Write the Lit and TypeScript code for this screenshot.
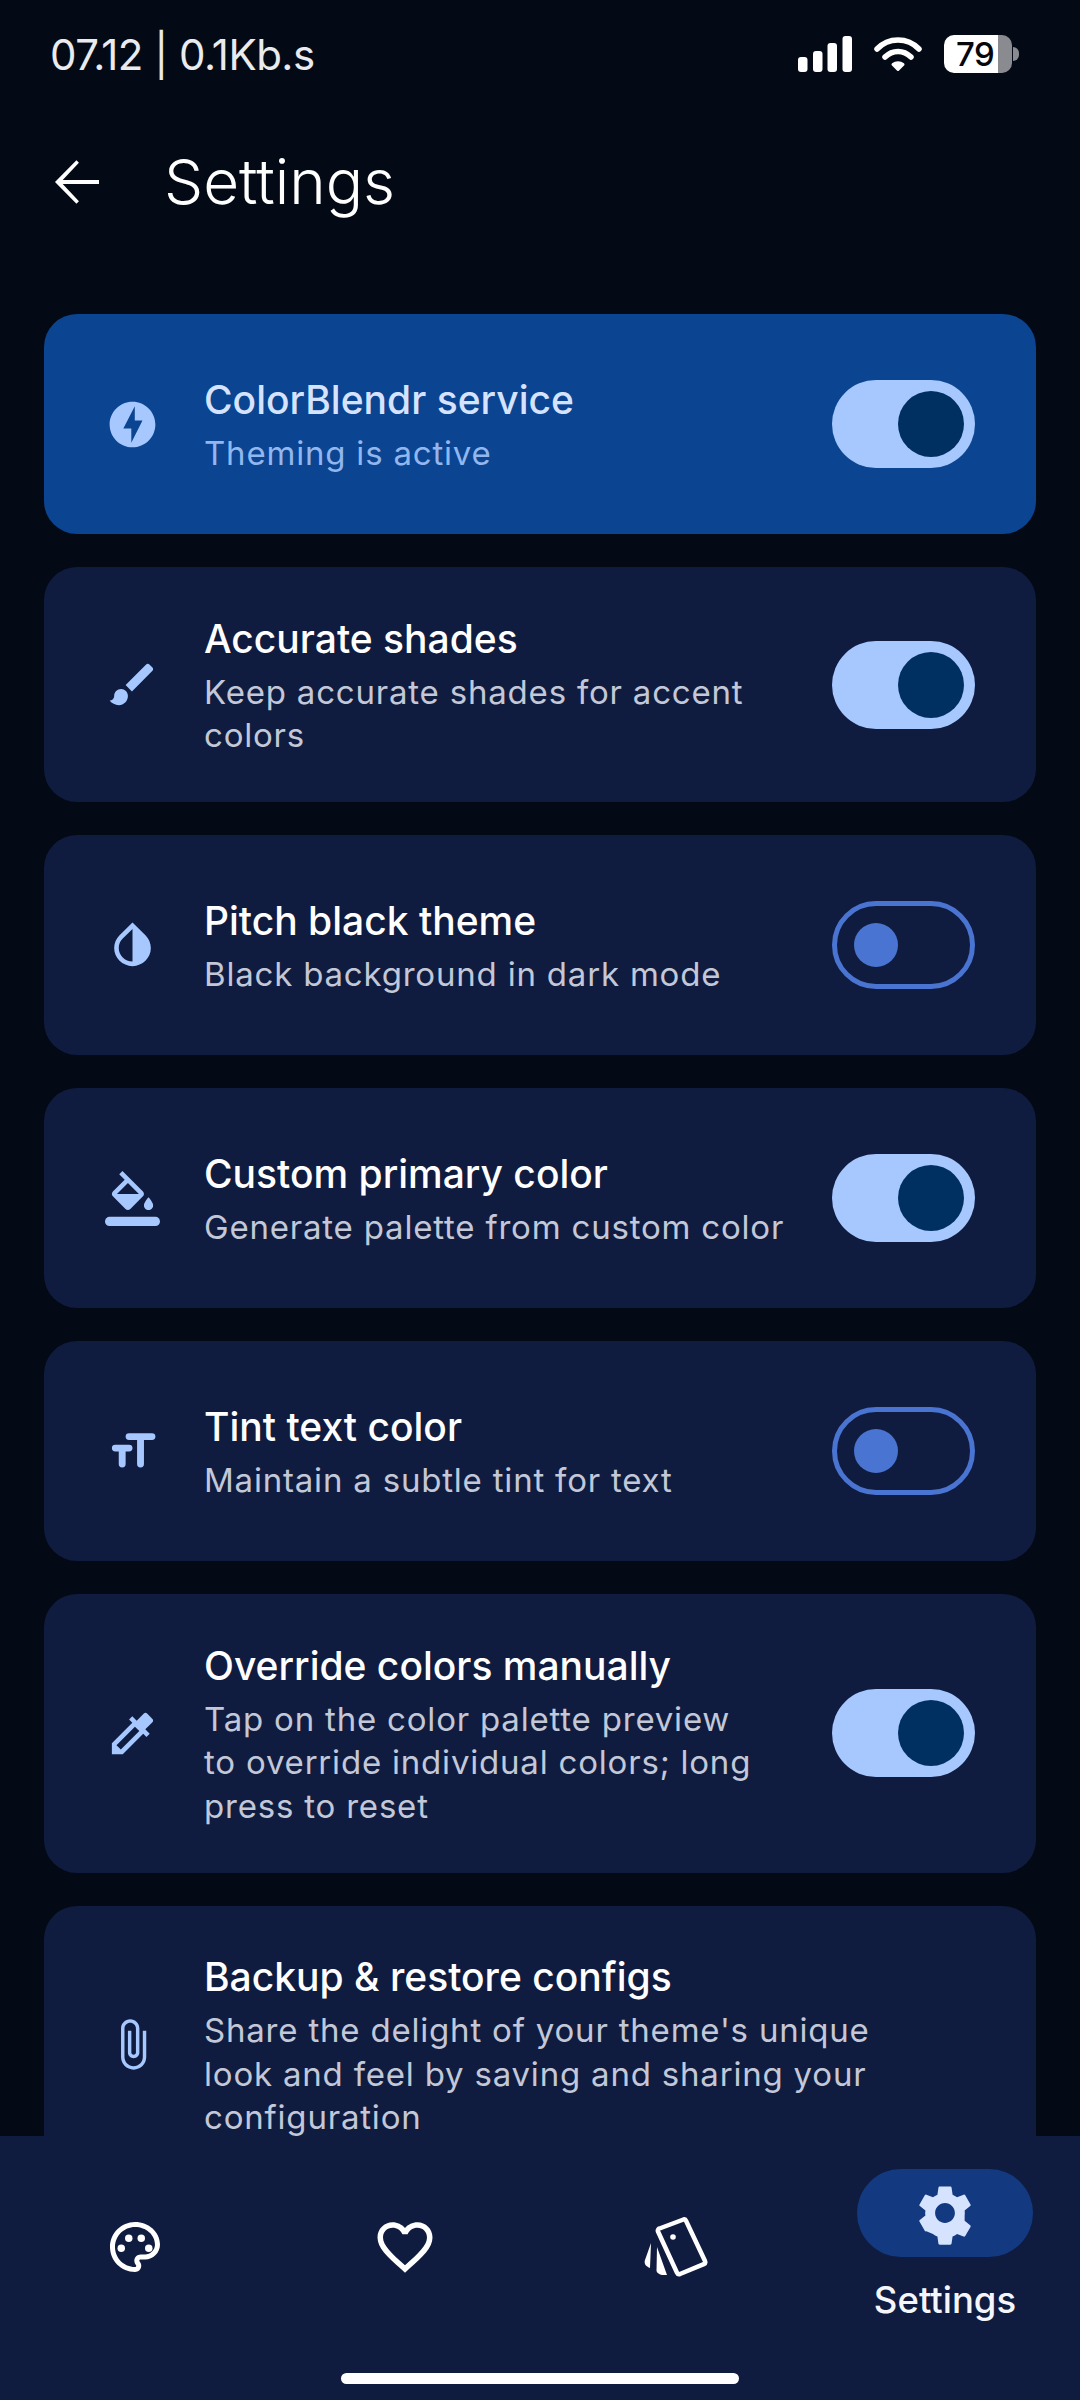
import { LitElement, html, css } from "lit";
import { customElement } from "lit/decorators.js";

const path = (d: string) => html`<svg class="ic" viewBox="0 0 24 24" fill="currentColor"><path d=${d}></path></svg>`;

const icons = {
  bolt: path("M12 2.02c-5.51 0-9.98 4.47-9.98 9.98s4.47 9.98 9.98 9.98 9.98-4.47 9.98-9.98S17.51 2.02 12 2.02zM11.48 20v-6.26H8L13 4v6.26h3.35L11.48 20z"),
  brush: path("M7 14c-1.66 0-3 1.34-3 3 0 1.31-1.16 2-2 2 .92 1.22 2.49 2 4 2 2.21 0 4-1.79 4-4 0-1.66-1.34-3-3-3zm13.71-9.37l-1.34-1.34c-.39-.39-1.02-.39-1.41 0L9 12.25 11.75 15l8.96-8.96c.39-.39.39-1.02 0-1.41z"),
  drop: path("M12 4.81V19c-3.31 0-6-2.63-6-5.87 0-1.56.62-3.03 1.75-4.14L12 4.81M6.35 7.56C4.9 8.99 4 10.96 4 13.13 4 17.48 7.58 21 12 21s8-3.52 8-7.87c0-2.17-.9-4.14-2.35-5.57L12 2 6.35 7.56z"),
  fill: html`<svg class="ic" viewBox="0 0 24 24" fill="currentColor"><path d="M16.56 8.94L7.62 0 6.21 1.41l2.38 2.38-5.15 5.15c-.59.59-.59 1.54 0 2.12l5.5 5.5c.29.29.68.44 1.06.44s.77-.15 1.06-.44l5.5-5.5c.59-.58.59-1.53 0-2.12zM5.21 10L10 5.21 14.79 10H5.21zM19 11.5s-2 2.17-2 3.5c0 1.1.9 2 2 2s2-.9 2-2c0-1.33-2-3.5-2-3.5z"></path><rect x="0" y="20" width="24" height="4" rx="2"></rect></svg>`,
  text: html`<svg class="ic" viewBox="0 0 24 24" fill="none" stroke="currentColor" stroke-width="3" stroke-linecap="round"><path d="M10.5 5.5h10M15.5 5.5v12M4.500 10.500h6M7.500 10.500v7"></path></svg>`,
  picker: path("M20.71 5.63l-2.34-2.34c-.39-.39-1.02-.39-1.41 0l-3.12 3.12-1.93-1.91-1.41 1.41 1.42 1.42L3 16.25V21h4.75l8.92-8.92 1.42 1.42 1.41-1.41-1.92-1.92 3.12-3.12c.4-.4.4-1.03.01-1.42zM6.92 19L5 17.08l8.06-8.06 1.92 1.92L6.92 19z"),
  clip: path("M16.5 6v11.5c0 2.21-1.79 4-4 4s-4-1.79-4-4V5c0-1.38 1.12-2.5 2.5-2.5s2.5 1.12 2.5 2.5v10.5c0 .55-.45 1-1 1s-1-.45-1-1V6H10v9.5c0 1.38 1.12 2.5 2.5 2.5s2.5-1.12 2.5-2.5V5c0-2.21-1.79-4-4-4S7 2.79 7 5v12.5c0 3.04 2.46 5.5 5.5 5.5s5.5-2.46 5.5-5.5V6h-1.5z"),
};

const rows = [
  { icon: icons.bolt, title: "ColorBlendr service", sub: "Theming is active", on: true, hi: true },
  { icon: icons.brush, title: "Accurate shades", sub: "Keep accurate shades for accent\ncolors", on: true },
  { icon: icons.drop, title: "Pitch black theme", sub: "Black background in dark mode", on: false },
  { icon: icons.fill, title: "Custom primary color", sub: "Generate palette from custom color", on: true },
  { icon: icons.text, title: "Tint text color", sub: "Maintain a subtle tint for text", on: false },
  { icon: icons.picker, title: "Override colors manually", sub: "Tap on the color palette preview\nto override individual colors; long\npress to reset", on: true },
  { icon: icons.clip, title: "Backup & restore configs", sub: "Share the delight of your theme's unique\nlook and feel by saving and sharing your\nconfiguration" },
] as { icon: unknown; title: string; sub: string; on?: boolean; hi?: boolean }[];

@customElement("app-root")
export class AppRoot extends LitElement {
  static styles = css`
    :host { display: block; font-family: Inter, "Noto Sans", sans-serif; }
    .page { height: 2400px; background: #030a15; display: flex; flex-direction: column; overflow: hidden; color: #fff; }
    .status { height: 108px; flex: none; display: flex; align-items: center; justify-content: space-between; padding: 0 61px 0 50px; box-sizing: border-box; }
    .clock { font-size: 42px; font-weight: 400; letter-spacing: -0.5px; color: #e9ebee; }
    .sys { display: flex; align-items: center; gap: 22px; }
    .signal { width: 54px; height: 36px; display: block; }
    .wifi { width: 48px; height: 36px; display: block; }
    .batt { display: flex; align-items: center; gap: 1px; }
    .cell { width: 68px; height: 38px; border-radius: 10px; background: linear-gradient(90deg, #fff 80%, #8a8b90 80%); color: #05070c; font-size: 33px; font-weight: 500; line-height: 38px; padding-left: 12px; box-sizing: border-box; letter-spacing: -0.5px; }
    .nub { width: 6px; height: 14px; background: #8a8b90; border-radius: 0 7px 7px 0; }
    .head { height: 147px; flex: none; display: flex; align-items: center; gap: 54px; padding-left: 44px; box-sizing: border-box; }
    .back { width: 66px; height: 66px; display: block; color: #fff; }
    .head h1 { margin: 0; font-size: 62px; font-weight: 300; letter-spacing: 0; }
    main { flex: 1; min-height: 0; overflow: hidden; padding: 59px 44px 0; display: flex; flex-direction: column; gap: 33px; }
    .card { flex: none; min-height: 220px; box-sizing: border-box; border-radius: 33px; background: #101c3f; display: flex; align-items: center; gap: 44px; padding: 44.5px 61px; color: #a6c8ff; }
    .card.hi { background: #0b4490; }
    .ic { width: 55px; height: 55px; flex: none; display: block; }
    .txt { flex: 1; min-width: 0; padding-top: 3px; }
    .t { font-size: 39px; font-weight: 500; line-height: 48px; margin-bottom: 8px; color: #fff; }
    .s { font-size: 33px; font-weight: 400; line-height: 43.5px; color: #c3c8d8; white-space: pre-line; letter-spacing: 0.8px; }
    .hi .t { color: #d5e3ff; }
    .hi .s { color: #92b6ee; }
    .tg { width: 143px; height: 88px; flex: none; box-sizing: border-box; border-radius: 44px; display: flex; align-items: center; }
    .tg.on { background: #a6c8ff; justify-content: flex-end; padding-right: 11px; }
    .tg.off { border: 5.5px solid #4a74d2; padding-left: 16.5px; }
    .thumb { border-radius: 50%; }
    .on .thumb { width: 66px; height: 66px; background: #003062; }
    .off .thumb { width: 44px; height: 44px; background: #4a74d2; }
    nav { flex: none; height: 264px; background: #101c3f; box-sizing: border-box; display: flex; flex-direction: column; }
    .tabs { height: 237px; flex: none; display: grid; grid-template-columns: repeat(4, 1fr); }
    .tab { display: flex; flex-direction: column; align-items: center; padding-top: 78px; box-sizing: border-box; }
    .tab svg { width: 66px; height: 66px; display: block; color: #fff; }
    .tab .small { width: 60px; height: 60px; margin-top: 3px; }
    .tab.active { padding-top: 33px; }
    .pill { width: 176px; height: 88px; border-radius: 44px; background: #133a80; display: flex; align-items: center; justify-content: center; }
    .pill svg { color: #d5e3ff; }
    .lbl { margin-top: 21px; font-size: 36.5px; font-weight: 500; line-height: 44px; color: #f4f6fc; }
    .bar { align-self: center; width: 398px; height: 11px; border-radius: 6px; background: #fff; }
  `;

  render() {
    return html`<div class="page">
      <div class="status">
        <div class="clock">07.12 | 0.1Kb.s</div>
        <div class="sys">
          <svg class="signal" viewBox="0 0 54 36" fill="#fff">
            <rect x="0" y="21" width="9.5" height="15" rx="3"></rect>
            <rect x="15" y="15" width="9.5" height="21" rx="3"></rect>
            <rect x="29.5" y="7" width="9.5" height="29" rx="3"></rect>
            <rect x="44.5" y="0" width="9.5" height="36" rx="3"></rect>
          </svg>
          <svg class="wifi" viewBox="0 0 48 36" fill="none" stroke="#fff" stroke-width="5.5" stroke-linecap="round" stroke-linejoin="round">
            <path d="M3 13C14.5 1 33.5 1 45 13"></path>
            <path d="M11 21c7.500-7.500 18.500-7.500 26 0"></path>
            <path d="M24 33.500l-5-5c3-2.500 7-2.500 10 0z" fill="#fff" stroke-width="3"></path>
          </svg>
          <div class="batt"><div class="cell">79</div><div class="nub"></div></div>
        </div>
      </div>
      <div class="head">
        <svg class="back" viewBox="0 0 24 24" fill="currentColor"><path d="M20 11.300H6.800l5.900-6.300-.9-.9L4 12l7.800 7.900.9-.9-5.900-6.300H20z"></path></svg>
        <h1>Settings</h1>
      </div>
      <main>
        ${rows.map((r) => html`<div class="card ${r.hi ? "hi" : ""}">
          ${r.icon}
          <div class="txt"><div class="t">${r.title}</div><div class="s">${r.sub}</div></div>
          ${r.on === undefined ? "" : html`<div class="tg ${r.on ? "on" : "off"}"><div class="thumb"></div></div>`}
        </div>`)}
      </main>
      <nav>
        <div class="tabs">
          <div class="tab">
            <svg class="small" viewBox="0 0 24 24" fill="currentColor">
              <path d="M12 22C6.490 22 2 17.510 2 12S6.490 2 12 2s10 4.040 10 9c0 3.310-2.690 6-6 6h-1.770c-.28 0-.5.22-.5.5 0 .12.05.23.13.33.41.47.64 1.060.64 1.670 0 1.380-1.120 2.500-2.500 2.500zm0-18c-4.410 0-8 3.590-8 8s3.590 8 8 8c.28 0 .5-.22.5-.5 0-.16-.08-.28-.14-.35-.41-.46-.63-1.050-.63-1.650 0-1.380 1.120-2.500 2.500-2.500H16c2.210 0 4-1.790 4-4 0-3.860-3.590-7-8-7z"></path>
              <circle cx="6.500" cy="12.500" r="1.500"></circle><circle cx="9.500" cy="8.500" r="1.500"></circle><circle cx="14.500" cy="8.500" r="1.500"></circle><circle cx="17.500" cy="12.500" r="1.500"></circle>
            </svg>
          </div>
          <div class="tab">
            <svg viewBox="0 0 24 24" fill="currentColor"><path d="M16.500 3c-1.740 0-3.410.81-4.500 2.090C10.910 3.810 9.240 3 7.500 3 4.420 3 2 5.420 2 8.500c0 3.780 3.400 6.860 8.550 11.540L12 21.350l1.450-1.320C18.600 15.360 22 12.280 22 8.500 22 5.420 19.580 3 16.500 3zm-4.400 15.550l-.1.1-.1-.1C7.140 14.240 4 11.390 4 8.500 4 6.500 5.500 5 7.500 5c1.540 0 3.040.99 3.570 2.360h1.870C13.460 5.990 14.960 5 16.500 5c2 0 3.500 1.500 3.500 3.500 0 2.890-3.140 5.740-7.900 10.050z"></path></svg>
          </div>
          <div class="tab">
            <svg viewBox="0 0 66 66" fill="none" stroke="currentColor">
              <path d="M17.500 14.500 41.500 5.500a2 2 0 0 1 2.500 1.200L63 47a2.500 2.500 0 0 1-1.200 3.200L38 60a2.500 2.500 0 0 1-3-1.300L16 17.500a2.200 2.200 0 0 1 1.500-3z" stroke-width="4.500" stroke-linejoin="round"></path>
              <circle cx="31" cy="23" r="2.800" fill="currentColor" stroke="none"></circle>
              <path d="M9 29 3 46c-1 3 0 6 5 8zM15 33l-.5 24c.5 2 3 3.500 5.500 4h5z" fill="currentColor" stroke="none"></path>
            </svg>
          </div>
          <div class="tab active">
            <div class="pill"><svg viewBox="0 0 24 24" fill="currentColor"><path d="M19.140 12.940c.04-.3.06-.61.06-.94 0-.32-.02-.64-.07-.94l2.030-1.580c.18-.14.23-.41.12-.61l-1.920-3.320c-.12-.22-.37-.29-.59-.22l-2.390.96c-.5-.38-1.030-.7-1.620-.94l-.36-2.540c-.04-.24-.24-.41-.48-.41h-3.840c-.24 0-.43.17-.47.41l-.36 2.540c-.59.24-1.130.57-1.620.94l-2.390-.96c-.22-.08-.47 0-.59.22L2.740 8.870c-.12.21-.08.47.12.61l2.030 1.580c-.05.3-.09.63-.09.94s.02.64.07.94l-2.030 1.580c-.18.14-.23.41-.12.61l1.920 3.320c.12.22.37.29.59.22l2.390.96c.5.38 1.030.7 1.620.94l.36 2.540c.05.24.24.41.48.41h3.840c.24 0 .44-.17.47-.41l.36-2.540c.59-.24 1.130-.56 1.620-.94l2.390.96c.22.08.47 0 .59-.22l1.920-3.320c.12-.22.07-.47-.12-.61l-2.010-1.580zM12 15.600c-1.980 0-3.600-1.620-3.600-3.600s1.620-3.600 3.600-3.600 3.600 1.620 3.600 3.600-1.620 3.600-3.600 3.600z"></path></svg></div>
            <div class="lbl">Settings</div>
          </div>
        </div>
        <div class="bar"></div>
      </nav>
    </div>`;
  }
}
